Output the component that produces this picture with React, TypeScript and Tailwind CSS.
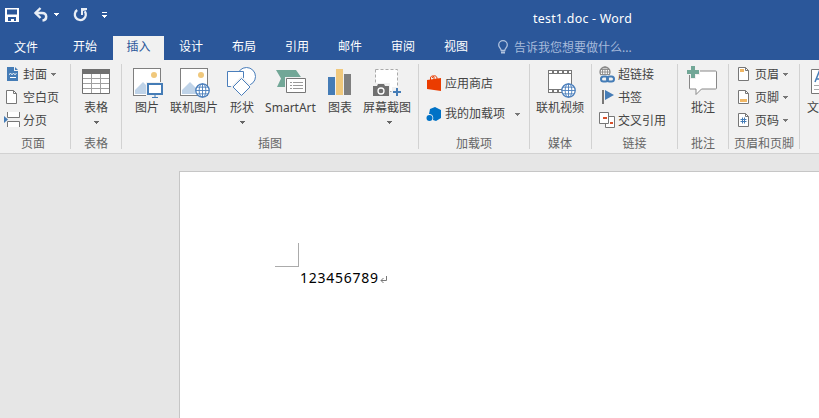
import type { ReactNode } from 'react';

const Arrow = ({ className = '' }: { className?: string }) => (
  <svg className={`shrink-0 ${className}`} width="5" height="3" viewBox="0 0 5 3" fill="currentColor" shapeRendering="crispEdges">
    <path d="M0 0h5v1H4v1H3v1H2V2H1V1H0z" />
  </svg>
);

const Divider = () => <div className="mt-1 h-[85px] w-px shrink-0 bg-[#d2d2d2]" />;

function Group({ label, width, labelClass = '', children }: { label: string; width: string; labelClass?: string; children: ReactNode }) {
  return (
    <section className={`flex h-[93px] shrink-0 flex-col ${width}`}>
      <div className="flex h-[76px] pt-[3px]">{children}</div>
      <div className={`h-4 text-center leading-4 whitespace-nowrap text-[#666666] ${labelClass}`}>{label}</div>
    </section>
  );
}

function Big({ label, width, box, arrow, children }: { label: string; width: string; box: string; arrow?: boolean; children: ReactNode }) {
  return (
    <button className={`flex shrink-0 flex-col items-center ${width}`}>
      <svg className="h-[37px] w-full shrink-0" viewBox={box} fill="none">{children}</svg>
      <span className="h-4 leading-4 whitespace-nowrap">{label}</span>
      {arrow && <Arrow className="mt-[5px] text-[#666666]" />}
    </button>
  );
}

function Row({ label, box, arrow, iconClass, height = 'h-[23px]', arrowClass = 'ml-1', children }: {
  label: string; box: string; arrow?: boolean; iconClass: string; height?: string; arrowClass?: string; children: ReactNode;
}) {
  return (
    <button className={`flex items-center ${height}`}>
      <svg className={`h-[23px] shrink-0 ${iconClass}`} viewBox={box} fill="none">{children}</svg>
      <span className="leading-4 whitespace-nowrap">{label}</span>
      {arrow && <Arrow className={`text-[#777777] ${arrowClass}`} />}
    </button>
  );
}

const Globe = ({ cx, cy, r, color = '#4a7ebb' }: { cx: number; cy: number; r: number; color?: string }) => (
  <g stroke={color} strokeWidth="0.9">
    <circle cx={cx} cy={cy} r={r} fill="#fff" strokeWidth="1.3" />
    <ellipse cx={cx} cy={cy} rx={r * 0.5} ry={r} />
    <path d={`M${cx} ${cy - r}V${cy + r}M${cx - r} ${cy}H${cx + r}M${cx - r * 0.85} ${cy - r * 0.5}H${cx + r * 0.85}M${cx - r * 0.85} ${cy + r * 0.5}H${cx + r * 0.85}`} />
  </g>
);

const Picture = ({ x }: { x: number }) => (
  <g>
    <rect x={x + 0.5} y="68.5" width="27" height="27" fill="#fff" stroke="#7f7f7f" />
    <path d={`M${x + 2} 94V90l8-8 7 7v5z`} fill="#bfd3e8" />
    <circle cx={x + 21} cy="75" r="3" fill="#f0c87c" />
  </g>
);

const Page = ({ x, y }: { x: number; y: number }) => (
  <g stroke="#777">
    <path d={`M${x + 0.5} ${y + 0.5}h7l3 3v10h-10z`} fill="#fff" />
    <path d={`M${x + 7.5} ${y + 0.5}v3h3`} />
  </g>
);

const tabs = ['设计', '布局', '引用', '邮件', '审阅', '视图'];

export default function App() {
  return (
    <div className="flex h-[418px] w-[819px] flex-col overflow-hidden bg-[#e6e6e6] font-['Noto_Sans','Noto_Sans_CJK_SC',sans-serif] text-[12px] text-[#444444]">
      <header className="h-[60px] shrink-0 bg-[#2b579a] text-white">
        <div className="flex h-9">
          <svg className="w-[120px] shrink-0" viewBox="0 0 120 36" fill="none">
            <path d="M5 8h14v14H5z" fill="#fff" />
            <path d="M7 9.500h10v5H7zM8 17h8v4h-2v-2h-3v2H8z" fill="#2b579a" />
            <path d="M35.500 13H42c5.500 0 5.500 7 .5 7.500" stroke="#e9eef6" strokeWidth="2.500" />
            <path d="M40.500 8L35.500 13l5 5" stroke="#e9eef6" strokeWidth="2.400" />
            <path d="M54 13h5v1h-1v1h-1v1h-1v-1h-1v-1h-1z" fill="#fff" />
            <path d="M77.200 10a5.500 5.500 0 1 0 7.500 1.200" stroke="#e9eef6" strokeWidth="2.300" />
            <path d="M81 8h6v2l-4 1v4h-2z" fill="#e9eef6" />
            <path d="M102 12h5v1h-5zM102 15h5v1h-1v1h-1v1h-1v-1h-1v-1h-1z" fill="#fff" />
          </svg>
          <div className="ml-[413px] pt-[11px] text-[12.4px] leading-4 tracking-[0.25px] whitespace-nowrap">test1.doc - Word</div>
        </div>
        <nav className="flex h-6 leading-[22px]">
          <div className="ml-[14px] w-[46px] pt-px">文件</div>
          <div className="w-[53px] pl-[13px]">开始</div>
          <div className="w-[51px] bg-[#f1f1f1] text-center text-[#2b579a]">插入</div>
          <div className="ml-[15px] flex">
            {tabs.map((t) => <div key={t} className="w-[53px] shrink-0">{t}</div>)}
          </div>
          <svg className="h-6 w-[17px] shrink-0" viewBox="497 36 17 24" fill="none" stroke="#b0c2de" strokeWidth="1.3">
            <path d="M501.2 50.5c0-2-2.5-2.8-2.5-5.5a4.3 4.3 0 0 1 8.6 0c0 2.700-2.500 3.500-2.500 5.500z" />
            <path d="M501 52.500h4" strokeWidth="2" />
          </svg>
          <div className="pt-px whitespace-nowrap text-[#a6badb]">告诉我您想要做什么...</div>
        </nav>
      </header>

      <div className="flex h-[94px] shrink-0 overflow-hidden border-b border-[#d2d2d2] bg-[#f1f1f1]">
        <Group label="页面" width="w-[70px]" labelClass="w-[66px]">
          <div className="flex flex-col">
            <Row label="封面" box="0 63 23 23" iconClass="w-[23px]" arrow>
              <path d="M7 67h7v4h4v10H7z" fill="#457cb6" />
              <path d="M15 67l3 3h-3z" fill="#457cb6" />
              <path d="M9 74.500l1.500-1 1.500 1 1.500-1 1.500 1 1.500-1M10 77.500h6" stroke="#fff" />
            </Row>
            <Row label="空白页" box="0 86 23 23" iconClass="w-[23px]"><Page x={6} y={90} /></Row>
            <Row label="分页" box="0 109 23 23" iconClass="w-[23px]">
              <path d="M7.500 112v5.500h12V112M7.500 127v-5.500h12v5.500" fill="#fff" stroke="#777" />
              <path d="M4 116l4 3.500-4 3.500z" fill="#457cb6" />
            </Row>
          </div>
        </Group>
        <Divider />
        <Group label="表格" width="w-[50px]">
          <Big label="表格" width="w-[50px]" box="71 63 50 37" arrow>
            <path d="M82.500 69.500h27v24h-27z" fill="#fff" stroke="#707070" />
            <path d="M82 69h28v5H82z" fill="#707070" />
            <path d="M83 78.500h26M83 83.500h26M83 88.500h26M91.500 74v19M100.500 74v19" stroke="#a0a0a0" />
          </Big>
        </Group>
        <Divider />
        <Group label="插图" width="w-[296px]">
          <div className="flex pl-[5px]">
            <Big label="图片" width="w-[40px]" box="127 63 40 37">
              <Picture x={133} />
              <path d="M146 82h18v14h-18z" fill="#f1f1f1" />
              <rect x="148" y="84" width="14" height="10" fill="#fff" stroke="#457cb6" strokeWidth="2" />
              <path d="M155 95v2M152 97.500h6" stroke="#457cb6" />
            </Big>
            <Big label="联机图片" width="w-[54px]" box="167 63 54 37">
              <Picture x={180} /><Globe cx={202.500} cy={90.500} r={6.700} />
            </Big>
            <Big label="形状" width="w-[42px]" box="221 63 42 37" arrow>
              <g stroke="#4a7ebb" fill="#fff">
                <circle cx="246.500" cy="76.500" r="9" />
                <path d="M227.500 71.500h16v15h-16z" />
                <path d="M241.500 78l9 9-9 9-9-9z" stroke="#f1f1f1" strokeWidth="3" />
                <path d="M241.500 78.500l8.500 8.500-8.500 8.500-8.500-8.500z" />
              </g>
            </Big>
            <Big label="SmartArt" width="w-[55px]" box="263 63 55 37">
              <path d="M276 70h20l6 8.500-6 8.500h-19l4-8.500z" fill="#72a797" />
              <path d="M285 77h22v17h-22z" fill="#f1f1f1" />
              <path d="M286.500 78.500h19v14h-19z" fill="#fff" stroke="#777" />
              <path d="M290 82.500h2m1 0h10M290 85.500h2m1 0h10M290 88.500h2m1 0h10" stroke="#999" />
            </Big>
            <Big label="图表" width="w-[44px]" box="318 63 44 37">
              <path d="M328 77h7v18h-7z" fill="#457cb6" />
              <path d="M336 69h7v26h-7z" fill="#f0c87c" />
              <path d="M344 74h7v21h-7z" fill="#7f7f7f" />
            </Big>
            <Big label="屏幕截图" width="w-[50px]" box="362 63 50 37">
              <path d="M375.500 69.500h22v22h-22z" fill="#fff" stroke="#aaa" strokeDasharray="3 2" />
              <path d="M372 83h18v14h-18zM392 87h10v10h-10z" fill="#f1f1f1" />
              <path d="M373 86h4l1-2h6l1 2h4v10h-16z" fill="#707070" />
              <circle cx="381" cy="91" r="3" fill="#707070" stroke="#fff" strokeWidth="1.300" />
              <path d="M397 88v8M393 92h8" stroke="#457cb6" strokeWidth="2" />
            </Big>
            <Arrow className="mt-[58px] -ml-[25px] text-[#666666]" />
          </div>
        </Group>
        <Divider />
        <Group label="加载项" width="w-[110px]">
          <div className="flex flex-col pt-[5px]">
            <Row label="应用商店" box="419 71 26 23" iconClass="w-[26px]" height="h-[31px]">
              <path d="M427 79l14-2v13l-14-2z" fill="#eb3c00" />
              <path d="M430.500 80v-3c0-2 3-3 3.500-1v3M432.500 77c0-3 4-3 4.500 0v2" stroke="#eb3c00" />
            </Row>
            <Row label="我的加载项" box="419 102 26 23" iconClass="w-[26px]" height="h-[30px]" arrow arrowClass="ml-[10px]">
              <path d="M430 108l5-2 6 3v8l-5 3-3-1c1-4-1-6-4-6z" fill="#0072c6" />
              <circle cx="429.500" cy="117" r="3" fill="#0072c6" />
            </Row>
          </div>
        </Group>
        <Divider />
        <Group label="媒体" width="w-[61px]" labelClass="w-[60px]">
          <Big label="联机视频" width="w-[60px]" box="530 63 60 37">
            <path d="M548 70h24v23h-24z" fill="#777" />
            <path d="M549 74h22v15h-22z" fill="#fff" />
            <path d="M549 72h22M549 91h22" stroke="#fff" strokeWidth="2" strokeDasharray="3 2" />
            <Globe cx={568.500} cy={90.500} r={6.700} />
          </Big>
        </Group>
        <Divider />
        <Group label="链接" width="w-[85px]">
          <div className="flex flex-col">
            <Row label="超链接" box="592 63 26 23" iconClass="w-[26px]">
              <Globe cx={605} cy={72} r={5} color="#888" />
              <rect x="599" y="75" width="17" height="8" rx="3" fill="#f1f1f1" />
              <g stroke="#457cb6" strokeWidth="2">
                <rect x="601" y="76.500" width="7" height="5" rx="2.500" />
                <rect x="607" y="76.500" width="7" height="5" rx="2.500" />
              </g>
            </Row>
            <Row label="书签" box="592 86 26 23" iconClass="w-[26px]">
              <path d="M602 90h2v14h-2z" fill="#777" />
              <path d="M605 90l9 5-9 5z" fill="#457cb6" />
            </Row>
            <Row label="交叉引用" box="592 109 26 23" iconClass="w-[26px]">
              <path d="M605.500 116.500h9v11h-9z" fill="#fff" stroke="#777" />
              <path d="M599.500 112.500h9v11h-9z" fill="#fff" stroke="#777" />
              <path d="M603 117h4v2h-4zM610 122h3v2h-3z" fill="#d9502a" />
            </Row>
          </div>
        </Group>
        <Divider />
        <Group label="批注" width="w-[50px]">
          <Big label="批注" width="w-[50px]" box="678 63 50 37">
            <path d="M690 71h25.500q1 0 1 1v16q0 1-1 1h-14l-5.500 5.500V89H690q-.5 0-.5-1V72z" fill="#fff" stroke="#888" />
            <path d="M690 65h6v4h4v6h-4v4h-6v-4h-4v-6h4z" fill="#f1f1f1" />
            <path d="M691 66h4v4h4v4h-4v4h-4v-4h-4v-4h4z" fill="#72a797" />
          </Big>
        </Group>
        <Divider />
        <Group label="页眉和页脚" width="w-[70px]">
          <div className="flex flex-col">
            <Row label="页眉" box="729 63 26 23" iconClass="w-[26px]" arrow>
              <Page x={738} y={67} /><path d="M740 69h4v3h-4z" fill="#f0b765" />
            </Row>
            <Row label="页脚" box="729 86 26 23" iconClass="w-[26px]" arrow>
              <Page x={738} y={90} /><path d="M740 99h7v3h-7z" fill="#f0b765" />
            </Row>
            <Row label="页码" box="729 109 26 23" iconClass="w-[26px]" arrow>
              <Page x={738} y={113} />
              <path d="M742.500 117.500v6M744.500 117.500v6M740.500 119.500h6M740.500 121.500h6" stroke="#457cb6" />
            </Row>
          </div>
        </Group>
        <Divider />
        <Group label="" width="w-[19px]">
          <div className="flex pl-[7px]">
            <Big label="文" width="w-[12px]" box="807 63 12 37">
              <path d="M811.500 69.500h27v24h-27z" fill="#fff" stroke="#777" />
              <path d="M815 82l4-10 4 10M816.500 79h5" stroke="#457cb6" strokeWidth="1.500" />
              <path d="M814 85.500h22M814 89.500h22" stroke="#aaa" />
            </Big>
          </div>
        </Group>
      </div>

      <main className="min-h-0 flex-1 pt-[17px] pl-[179px]">
        <div className="h-full border-t border-l border-[#c6c6c6] bg-white pt-[71px] pl-[95px]">
          <div className="h-6 w-6 border-r border-b border-[#ababab]" />
          <div className="flex items-center pt-[2px] pl-[25px] font-['Noto_Sans'] text-[14px] leading-[18px] tracking-[0.74px] text-black">
            <span>123456789</span>
            <svg className="mt-px ml-px h-2 w-[7px]" viewBox="0 0 7 8" fill="none" stroke="#777">
              <path d="M6.500 1v4.500H1M3.500 3L1 5.500 3.500 8" />
            </svg>
          </div>
        </div>
      </main>
    </div>
  );
}
